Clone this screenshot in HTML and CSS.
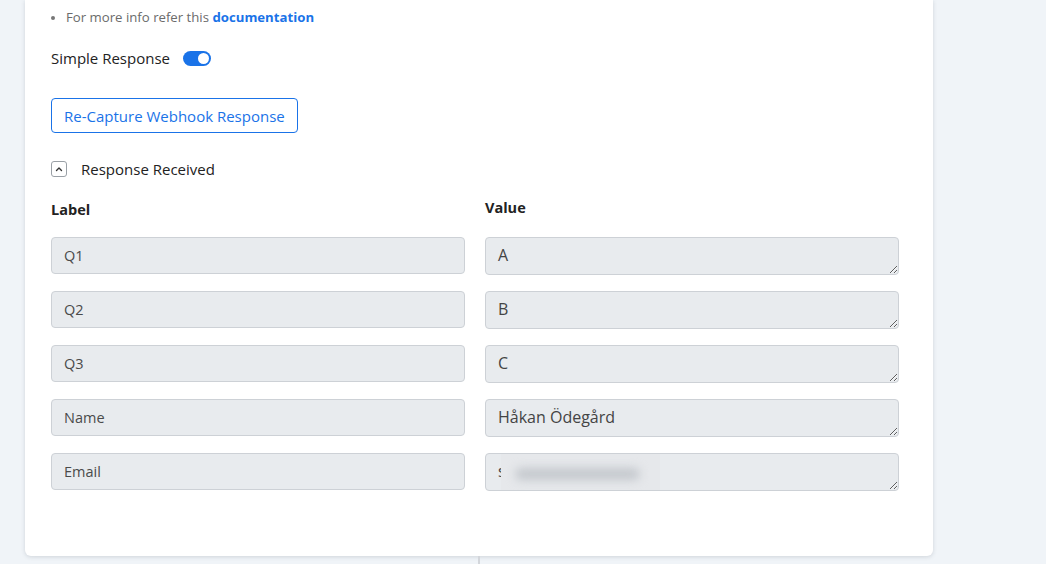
FILE: index.html
```html
<!DOCTYPE html>
<html>
<head>
<meta charset="utf-8">
<link rel="stylesheet" href="styles.css">
</head>
<body>
<div class="page">
  <div class="card">
    <ul class="info">
      <li>For more info refer this <a href="#">documentation</a></li>
    </ul>
    <div class="toggle-row">
      <span>Simple Response</span>
      <span class="switch"><span class="knob"></span></span>
    </div>
    <button class="btn-outline">Re-Capture Webhook Response</button>
    <div class="collapse-row">
      <span class="chev">
        <svg width="10" height="10" viewBox="0 0 10 10"><path d="M2.5 6.5 L5 4 L7.5 6.5" fill="none" stroke="#333" stroke-width="1.4" stroke-linecap="round" stroke-linejoin="round"/></svg>
      </span>
      <span>Response Received</span>
    </div>
    <div class="grid">
      <div class="head head-label">Label</div>
      <div class="head head-value">Value</div>

      <input class="field" readonly value="Q1">
      <textarea class="field area" readonly>A</textarea>

      <input class="field" readonly value="Q2">
      <textarea class="field area" readonly>B</textarea>

      <input class="field" readonly value="Q3">
      <textarea class="field area" readonly>C</textarea>

      <input class="field" readonly value="Name">
      <textarea class="field area" readonly>Håkan Ödegård</textarea>

      <input class="field" readonly value="Email">
      <div class="blur-wrap">
        <textarea class="field area" readonly>s</textarea>
        <div class="blur-box"><span class="blur-bar"></span></div>
      </div>
    </div>
  </div>
  <div class="divider"></div>
</div>
</body>
</html>
```

FILE: styles.css
```css
* { box-sizing: border-box; }
html, body {
  margin: 0;
  padding: 0;
  background: #f0f4f8;
  font-family: "Open Sans", "Liberation Sans", sans-serif;
  color: #2b2b2b;
  overflow: hidden;
}
.page {
  width: 1046px;
  height: 564px;
  position: relative;
}
.card {
  margin-left: 25px;
  width: 908px;
  height: 556px;
  background: #fff;
  border-radius: 0 0 6px 6px;
  box-shadow: 0 1px 4px rgba(60, 70, 90, 0.18);
  padding: 6px 34px 0 26px;
  display: flex;
  flex-direction: column;
  align-items: flex-start;
}
.info {
  margin: 0;
  padding: 0 0 0 15px;
  font-size: 13.2px;
  color: #6b6b6b;
  line-height: 22px;
}
.info li::marker { color: #777; font-size: 11px; }
.info a {
  color: #1a73e8;
  font-weight: 700;
  text-decoration: none;
}
.toggle-row {
  margin-top: 19px;
  display: flex;
  align-items: center;
  gap: 13px;
  font-size: 15px;
  line-height: 22px;
  color: #222;
}
.switch {
  width: 28px;
  height: 15px;
  border-radius: 8px;
  background: #1a73e8;
  display: flex;
  align-items: center;
  justify-content: flex-end;
  padding-right: 2px;
}
.knob {
  width: 11px;
  height: 11px;
  border-radius: 50%;
  background: #fff;
}
.btn-outline {
  margin-top: 29px;
  height: 35px;
  padding: 0 12px;
  border: 1px solid #1a73e8;
  border-radius: 4px;
  background: #fff;
  color: #1a73e8;
  font-family: inherit;
  font-size: 15px;
}
.collapse-row {
  margin-top: 27px;
  display: flex;
  align-items: center;
  gap: 14px;
  font-size: 15px;
  line-height: 18px;
  color: #222;
}
.chev {
  width: 16px;
  height: 16px;
  border: 1px solid #9aa0a6;
  border-radius: 3px;
  display: flex;
  align-items: center;
  justify-content: center;
}
.grid {
  margin-top: 23px;
  width: 848px;
  display: grid;
  grid-template-columns: 414px 414px;
  column-gap: 20px;
  row-gap: 16px;
}
.head {
  font-size: 14.5px;
  font-weight: 700;
  color: #222;
  line-height: 18px;
  height: 20px;
}
.head-value { margin-top: -2px; }
.field {
  display: block;
  width: 414px;
  height: 37px;
  margin: 0;
  padding: 0 12px;
  background: #e8ebee;
  border: 1px solid #cdd1d6;
  border-radius: 4px;
  font-family: inherit;
  font-size: 14.5px;
  color: #4a4a4a;
  outline: none;
}
.area {
  height: 38px;
  padding: 6px 12px 0;
  line-height: 22px;
  resize: vertical;
  overflow: hidden;
  color: #444;
  font-size: 16px;
}
.blur-wrap {
  position: relative;
  width: 414px;
  height: 38px;
}
.blur-box {
  position: absolute;
  left: 16px;
  top: 1px;
  width: 159px;
  height: 36px;
  background: #e6e8eb;
  overflow: hidden;
  display: flex;
  align-items: center;
  padding-left: 14px;
}
.blur-bar {
  display: block;
  width: 125px;
  height: 12px;
  margin-top: 4px;
  border-radius: 6px;
  background: #c4c8cd;
  filter: blur(5px);
}
.divider {
  position: absolute;
  left: 478px;
  top: 556px;
  width: 2px;
  height: 8px;
  background: #d3d6db;
}
```
